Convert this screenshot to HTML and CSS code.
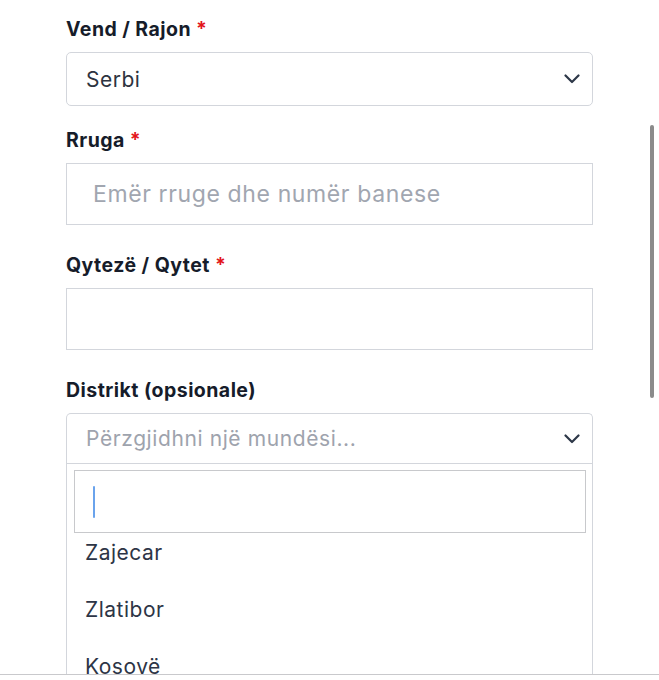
FILE: index.html
```html
<!DOCTYPE html>
<html lang="sq">
<head>
<meta charset="utf-8">
<title>Adresa</title>
<link rel="stylesheet" href="styles.css">
</head>
<body>
<div class="page">
  <form class="form">
    <div class="field">
      <label class="label">Vend / Rajon <span class="req">*</span></label>
      <div class="select">
        <span class="select-value">Serbi</span>
        <svg class="chev" width="16" height="10" viewBox="0 0 16 10"><path d="M1.5 1.5 L8 8 L14.5 1.5" fill="none" stroke="#2d3748" stroke-width="2.2" stroke-linecap="round" stroke-linejoin="round"/></svg>
      </div>
    </div>
    <div class="field field-gap-a">
      <label class="label">Rruga <span class="req">*</span></label>
      <div class="input"><span class="placeholder">Emër rruge dhe numër banese</span></div>
    </div>
    <div class="field field-gap-b">
      <label class="label">Qytezë / Qytet <span class="req">*</span></label>
      <div class="input"></div>
    </div>
    <div class="field field-gap-b">
      <label class="label">Distrikt (opsionale)</label>
      <div class="combo">
        <div class="combo-head">
          <span class="combo-placeholder">Përzgjidhni një mundësi...</span>
          <svg class="chev" width="16" height="10" viewBox="0 0 16 10"><path d="M1.5 1.5 L8 8 L14.5 1.5" fill="none" stroke="#2d3748" stroke-width="2.2" stroke-linecap="round" stroke-linejoin="round"/></svg>
        </div>
        <div class="combo-drop">
          <div class="search"><span class="caret"></span></div>
          <ul class="options">
            <li class="option">Zajecar</li>
            <li class="option">Zlatibor</li>
            <li class="option">Kosovë</li>
          </ul>
        </div>
      </div>
    </div>
  </form>
  <div class="scrollbar"></div>
</div>
</body>
</html>
```
FILE: styles.css
```css
html, body {
  margin: 0;
  padding: 0;
  background: #ffffff;
}
body {
  font-family: Inter, "Noto Sans", "Liberation Sans", sans-serif;
  color: #2d3748;
}
.page {
  position: relative;
  height: 674px;
  overflow: hidden;
  border-bottom: 1px solid #c9c9cc;
}
.form {
  width: 527px;
  margin-left: 66px;
  padding-top: 17px;
}
.field {
  display: flex;
  flex-direction: column;
}
.field-gap-a {
  margin-top: 22px;
}
.field-gap-b {
  margin-top: 28px;
}
.label {
  font-size: 19.5px;
  line-height: 24px;
  font-weight: 700;
  letter-spacing: 0.45px;
  color: #161c2a;
  margin-bottom: 11px;
}
.req {
  color: #e3151a;
}
.select {
  box-sizing: border-box;
  height: 54px;
  border: 1px solid #d3d6dc;
  border-radius: 5px;
  display: flex;
  align-items: center;
  justify-content: space-between;
  padding: 0 12px 0 19px;
}
.select-value {
  font-size: 21px;
  letter-spacing: 0.5px;
  color: #2d3340;
}
.chev {
  display: block;
}
.input {
  box-sizing: border-box;
  height: 62px;
  border: 1px solid #d3d6dc;
  display: flex;
  align-items: center;
  padding-left: 26px;
}
.placeholder {
  font-size: 23px;
  letter-spacing: 0.62px;
  color: #a1a6b0;
}
.combo {
  border: 1px solid #d3d6dc;
  border-bottom: none;
  border-radius: 5px 5px 0 0;
}
.combo-head {
  height: 49px;
  border-bottom: 1px solid #d3d6dc;
  display: flex;
  align-items: center;
  justify-content: space-between;
  padding: 0 12px 0 19px;
}
.combo-placeholder {
  font-size: 21px;
  letter-spacing: 0.6px;
  color: #9ea3ad;
}
.combo-drop {
  padding: 6px 6px 0 7px;
}
.search {
  box-sizing: border-box;
  height: 63px;
  border: 1px solid #c8c9cc;
  display: flex;
  align-items: center;
  padding-left: 18px;
}
.caret {
  display: block;
  width: 2px;
  height: 32px;
  border-radius: 1px;
  background: #6aa3ec;
}
.options {
  list-style: none;
  margin: 0;
  padding: 0;
}
.option {
  font-size: 21px;
  line-height: 26px;
  letter-spacing: 0.5px;
  padding: 7px 18px 24px 11px;
  color: #2d3546;
}
.scrollbar {
  position: absolute;
  left: 650px;
  top: 125px;
  width: 4px;
  height: 273px;
  border-radius: 2px;
  background: #8b8b8b;
}
```
